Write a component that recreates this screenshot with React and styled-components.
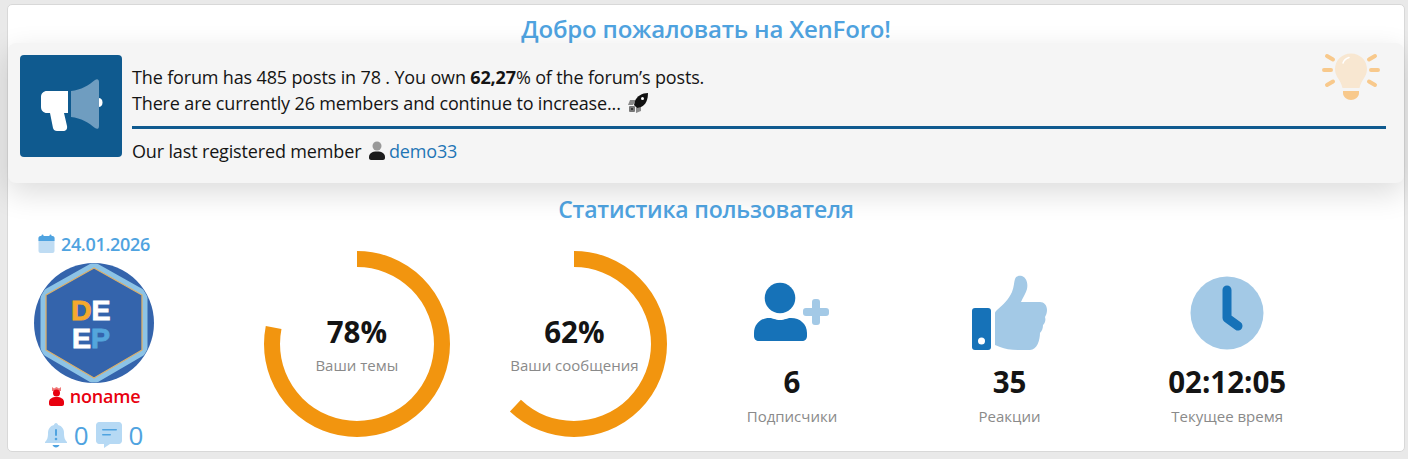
import React from 'react';
import styled, { createGlobalStyle } from 'styled-components';

const FONT = `"Open Sans", "Noto Sans", "Liberation Sans", sans-serif`;
const BLUE = '#4fa3e0';
const ICON_DARK = '#1672b8';
const ICON_LIGHT = '#a3c9e6';

const GlobalStyle = createGlobalStyle`
  html, body {
    margin: 0;
    height: 459px;
    overflow: hidden;
    background: #e9e9e9;
    font-family: ${FONT};
  }
  * { box-sizing: border-box; }
`;

const Page = styled.div`
  padding: 4px 3px 0 7px;
`;

const Card = styled.div`
  width: 1398px;
  height: 448px;
  background: #fff;
  border: 1px solid #d8d8d8;
  border-radius: 5px;
  display: flex;
  flex-direction: column;
`;

const Title = styled.h2`
  margin: 0;
  flex: none;
  height: ${p => p.$height}px;
  padding-top: ${p => p.$top}px;
  line-height: 28px;
  text-align: center;
  color: ${BLUE};
  font-size: ${p => p.$size}px;
  font-weight: 600;
  letter-spacing: -0.2px;
`;

const Notice = styled.div`
  position: relative;
  flex: none;
  height: 140px;
  background: #f5f5f5;
  border-radius: 8px;
  box-shadow: 0 10px 30px rgba(0, 0, 0, 0.14);
  padding: 12px 18px 0 12px;
  display: flex;
  gap: 10px;
`;

const NoticeIcon = styled.div`
  width: 102px;
  height: 102px;
  flex: none;
  background: #0f5a8f;
  border-radius: 4px;
`;

const NoticeBody = styled.div`
  flex: 1;
  color: #141414;
  font-size: 18px;
  letter-spacing: -0.15px;
  padding-top: 9px;
`;

const NoticeLine = styled.div`
  height: 26px;
  line-height: 26px;
  white-space: nowrap;
  svg {
    vertical-align: middle;
  }
`;

const Strong = styled.b`
  font-weight: 700;
`;

const Divider = styled.div`
  height: 3px;
  background: #0f5a8f;
  margin: 10px 0 9px;
`;

const MemberLink = styled.a`
  color: #1f75b5;
  margin-left: 3px;
`;

const InlineIcon = styled.svg`
  margin-left: 2px;
  position: relative;
  top: -2px;
`;

const Bulb = styled.svg`
  position: absolute;
  right: 22px;
  top: 6px;
`;

const StatsRow = styled.div`
  display: grid;
  grid-template-columns: 240px repeat(5, 217.6px);
  flex: 1;
`;

const UserColumn = styled.div`
  width: 172px;
  display: flex;
  flex-direction: column;
  align-items: center;
`;

const DateLine = styled.div`
  display: flex;
  align-items: center;
  gap: 6px;
  height: 24px;
  margin-top: 9px;
  color: ${BLUE};
  font-size: 18px;
  font-weight: 600;
  letter-spacing: -0.3px;
`;

const Avatar = styled.svg`
  margin-top: 7px;
  display: block;
`;

const UserName = styled.div`
  display: flex;
  align-items: center;
  gap: 5px;
  margin-top: 1px;
  height: 24px;
  color: #e8000f;
  font-size: 18px;
  font-weight: 600;
  letter-spacing: -0.2px;
`;

const Counters = styled.div`
  display: flex;
  align-items: center;
  gap: 7px;
  margin-top: 12px;
  height: 30px;
  color: ${BLUE};
  font-size: 26px;
  font-weight: 500;
`;

const RingSlot = styled.div`
  display: flex;
  justify-content: center;
  padding-top: 28px;
`;

const RingBox = styled.div`
  position: relative;
  width: 186px;
  height: 186px;
`;

const RingText = styled.div`
  position: absolute;
  inset: 0;
  display: flex;
  flex-direction: column;
  align-items: center;
  padding-top: 62px;
`;

const BigValue = styled.div`
  height: 38px;
  line-height: 38px;
  color: #141414;
  font-size: 29.5px;
  font-weight: 700;
`;

const SmallLabel = styled.div`
  height: 24px;
  line-height: 24px;
  margin-top: ${p => p.$top}px;
  color: #8a8a8a;
  font-size: 15px;
  white-space: nowrap;
`;

const StatSlot = styled.div`
  display: flex;
  flex-direction: column;
  align-items: center;
  padding-top: 52px;
`;

const StatIcon = styled.svg`
  display: block;
  height: 76px;
`;

const StatValue = styled(BigValue)`
  margin-top: 12px;
`;

const ringData = [
  { value: 78, label: 'Ваши темы' },
  { value: 62, label: 'Ваши сообщения' },
];

const Ring = ({ value, label }) => {
  const r = 85;
  const len = 2 * Math.PI * r;
  return (
    <RingSlot>
      <RingBox>
        <svg width="186" height="186" viewBox="0 0 186 186">
          <circle
            cx="93"
            cy="93"
            r={r}
            fill="none"
            stroke="#f2950f"
            strokeWidth="16"
            strokeDasharray={`${(len * value) / 100} ${len}`}
            transform="rotate(-90 93 93)"
          />
        </svg>
        <RingText>
          <BigValue>{value}%</BigValue>
          <SmallLabel $top={2}>{label}</SmallLabel>
        </RingText>
      </RingBox>
    </RingSlot>
  );
};

const Megaphone = () => (
  <svg width="102" height="102" viewBox="0 0 102 102">
    <path d="M27 36h21v22h-4l3 13c.6 3-1 5-4 5h-6c-2 0-3.500-1-4-3l-3-15h-3c-3.500 0-6-2.500-6-6v-10c0-3.500 2.500-6 6-6z" fill="#fff" />
    <path d="M51 36c10-1 18-6 24-11 2-1.500 4-1 4 2v44c0 3-2 3.500-4 2-6-5-14-10-24-11z" fill="#6f9dc0" />
    <path d="M79 43c2.500.5 3.500 2 3.500 4.500s-1 4-3.500 4.500z" fill="#fff" />
  </svg>
);

const Rocket = () => (
  <InlineIcon width="22" height="22" viewBox="0 0 22 22">
    <path d="M3 8h6l-3 5H1z" fill="#8a8a8a" />
    <path d="M14 13v6l-5 2v-5z" fill="#8a8a8a" />
    <rect x="2" y="14" width="6" height="6" rx="1" fill="#777" />
    <circle cx="5" cy="17" r="1" fill="#222" />
    <path d="M21 1c-6 0-11 3-13 8l-1 4 3 3 4-1c5-2 7-8 7-14z" fill="#111" />
    <circle cx="15.500" cy="6.500" r="1.500" fill="#fff" />
  </InlineIcon>
);

const MemberIcon = () => (
  <InlineIcon width="18" height="20" viewBox="0 0 18 20">
    <circle cx="9" cy="5" r="4.500" fill="#999" />
    <path d="M1 16c0-3.500 3-5.500 8-5.500s8 2 8 5.500v1c0 1-1 2-2 2H3c-1 0-2-1-2-2z" fill="#1c1c1c" />
  </InlineIcon>
);

const BulbIcon = () => (
  <Bulb width="62" height="54" viewBox="0 0 62 54">
    <path d="M31 4.500c-9 0-16 7-16 15.500 0 8 6 11 7.500 19h17c1.500-8 7.500-11 7.500-19 0-8.500-7-15.500-16-15.500z" fill="#f8e7d1" />
    <path d="M23 14c1-3 3-4.500 6-5.500" stroke="#fff" strokeWidth="1.500" fill="none" strokeLinecap="round" />
    <path d="M23 42h16v2c0 4-4 7-8 7s-8-3-8-7z" fill="#f8c98c" />
    <g stroke="#f8c98c" strokeWidth="4" strokeLinecap="round">
      <path d="M7 7l6 3.500M4 21h7M7 36l6-3.500M55 7l-6 3.500M58 21h-7M55 36l-6-3.500" />
    </g>
  </Bulb>
);

const CalendarIcon = () => (
  <svg width="17" height="20" viewBox="0 0 17 20">
    <rect x="0.500" y="2" width="16" height="17" rx="2" fill="#bfdcf3" />
    <path d="M0.500 4c0-1 1-2 2-2h12c1 0 2 1 2 2v3h-16z" fill={BLUE} />
    <rect x="3.500" y="0.500" width="2" height="4" rx="1" fill={BLUE} />
    <rect x="11.500" y="0.500" width="2" height="4" rx="1" fill={BLUE} />
  </svg>
);

const DeepAvatar = () => (
  <Avatar width="120" height="120" viewBox="0 0 120 120">
    <defs>
      <clipPath id="avatar-clip">
        <circle cx="60" cy="60" r="59.500" />
      </clipPath>
    </defs>
    <circle cx="60" cy="60" r="60" fill="#3464ac" />
    <g clipPath="url(#avatar-clip)">
      <path d="M60 5L108 32V87L60 115L12 87V32Z" fill="none" stroke="#8cc3e6" strokeWidth="11" strokeLinejoin="round" />
    </g>
    <path d="M60 5L108 32V87L60 115L12 87V32Z" fill="#3464ac" stroke="#dcb06a" strokeWidth="1.300" strokeLinejoin="round" />
    <g fontFamily="Liberation Sans" fontWeight="700" fontSize="28.5" strokeWidth="0.9">
      <text x="37" y="57">
        <tspan fill="#f5a92d" stroke="#f5a92d">D</tspan>
        <tspan fill="#fff" stroke="#fff">E</tspan>
      </text>
      <text x="38" y="85">
        <tspan fill="#fff" stroke="#fff">E</tspan>
        <tspan fill="#54a6dc" stroke="#54a6dc">P</tspan>
      </text>
    </g>
  </Avatar>
);

const RoleIcon = () => (
  <svg width="17" height="20" viewBox="0 0 17 20">
    <path d="M4 1l2 1.500L8.500 1l2.500 1.500L13 1v4H4z" fill="#f07a7a" />
    <circle cx="8.500" cy="7" r="3.500" fill="#e8000f" />
    <path d="M1 16c0-3 3-5 7.500-5s7.500 2 7.500 5v2c0 1-1 2-2 2H3c-1 0-2-1-2-2z" fill="#e8000f" />
  </svg>
);

const BellIcon = () => (
  <svg width="22" height="26" viewBox="0 0 22 26">
    <path d="M11 1c1 0 2 1 2 2 4 1 6 4 6 8 0 5 1 7 3 9v1H0v-1c2-2 3-4 3-9 0-4 2-7 6-8 0-1 1-2 2-2z" fill="#b6d9f4" />
    <rect x="10" y="7" width="2" height="7" rx="1" fill={BLUE} />
    <circle cx="11" cy="17" r="1.300" fill={BLUE} />
    <path d="M7.500 23h7c-.5 1.500-2 2.500-3.500 2.500S8 24.500 7.500 23z" fill={BLUE} />
  </svg>
);

const CommentIcon = () => (
  <svg width="26" height="26" viewBox="0 0 26 26">
    <path d="M3 0h20c1.500 0 3 1.500 3 3v16c0 1.500-1.500 3-3 3h-9l-6 4v-4H3c-1.500 0-3-1.500-3-3V3c0-1.500 1.500-3 3-3z" fill="#b6d9f4" />
    <rect x="6" y="7" width="15" height="1.600" rx="0.800" fill={BLUE} />
    <rect x="6" y="12" width="9" height="1.600" rx="0.800" fill={BLUE} />
  </svg>
);

const FollowersIcon = () => (
  <StatIcon viewBox="0 0 76 76" width="76">
    <circle cx="26" cy="23" r="15.300" fill={ICON_DARK} />
    <path d="M0 58c0-9 7-15 15-15 4 0 6 2 11 2s7-2 11-2c9 0 16 6 16 15v3c0 3-2 5-5 5H5c-3 0-5-2-5-5z" fill={ICON_DARK} />
    <rect x="49" y="33" width="26" height="8" rx="3" fill={ICON_LIGHT} />
    <rect x="58" y="24" width="8" height="26" rx="3" fill={ICON_LIGHT} />
  </StatIcon>
);

const ThumbIcon = () => (
  <StatIcon viewBox="0 0 76 76" width="76">
    <rect x="0" y="33" width="19" height="42" rx="3" fill={ICON_DARK} />
    <circle cx="9.500" cy="66" r="3.500" fill="#fff" />
    <path d="M23 38c0-1 1-2 2-3 6-5 12-11 15-18 2-5 2-10 3-13 1-3 4-4 7-3 5 2 6 8 5 13-1 4-4 8-6 13h19c4 0 7 3 7 8 0 3-1 5-2 7 1 3 0 6-2 8 0 3-1 6-3 8 0 7-3 17-10 17H47c-8 0-14-1-19-3l-5-2z" fill={ICON_LIGHT} />
  </StatIcon>
);

const ClockIcon = () => (
  <StatIcon viewBox="0 0 76 76" width="76">
    <circle cx="38" cy="38" r="36.500" fill={ICON_LIGHT} />
    <path d="M38 15v28l11 8" fill="none" stroke={ICON_DARK} strokeWidth="9" strokeLinecap="round" strokeLinejoin="round" />
  </StatIcon>
);

const statData = [
  { icon: <FollowersIcon />, value: '6', label: 'Подписчики' },
  { icon: <ThumbIcon />, value: '35', label: 'Реакции' },
  { icon: <ClockIcon />, value: '02:12:05', label: 'Текущее время' },
];

const App = () => (
  <Page>
    <GlobalStyle />
    <Card>
      <Title $height={38} $top={10} $size={24}>Добро пожаловать на XenForo!</Title>
      <Notice>
        <NoticeIcon><Megaphone /></NoticeIcon>
        <NoticeBody>
          <NoticeLine>The forum has 485 posts in 78 . You own <Strong>62,27</Strong>% of the forum’s posts.</NoticeLine>
          <NoticeLine>There are currently 26 members and continue to increase... <Rocket /></NoticeLine>
          <Divider />
          <NoticeLine>Our last registered member <MemberIcon /><MemberLink>demo33</MemberLink></NoticeLine>
        </NoticeBody>
        <BulbIcon />
      </Notice>
      <Title $height={40} $top={12} $size={23}>Статистика пользователя</Title>
      <StatsRow>
        <UserColumn>
          <DateLine><CalendarIcon />24.01.2026</DateLine>
          <DeepAvatar />
          <UserName><RoleIcon />noname</UserName>
          <Counters><BellIcon />0<CommentIcon />0</Counters>
        </UserColumn>
        {ringData.map(r => <Ring key={r.label} value={r.value} label={r.label} />)}
        {statData.map(s => (
          <StatSlot key={s.label}>
            {s.icon}
            <StatValue>{s.value}</StatValue>
            <SmallLabel $top={3}>{s.label}</SmallLabel>
          </StatSlot>
        ))}
      </StatsRow>
    </Card>
  </Page>
);

export default App;
